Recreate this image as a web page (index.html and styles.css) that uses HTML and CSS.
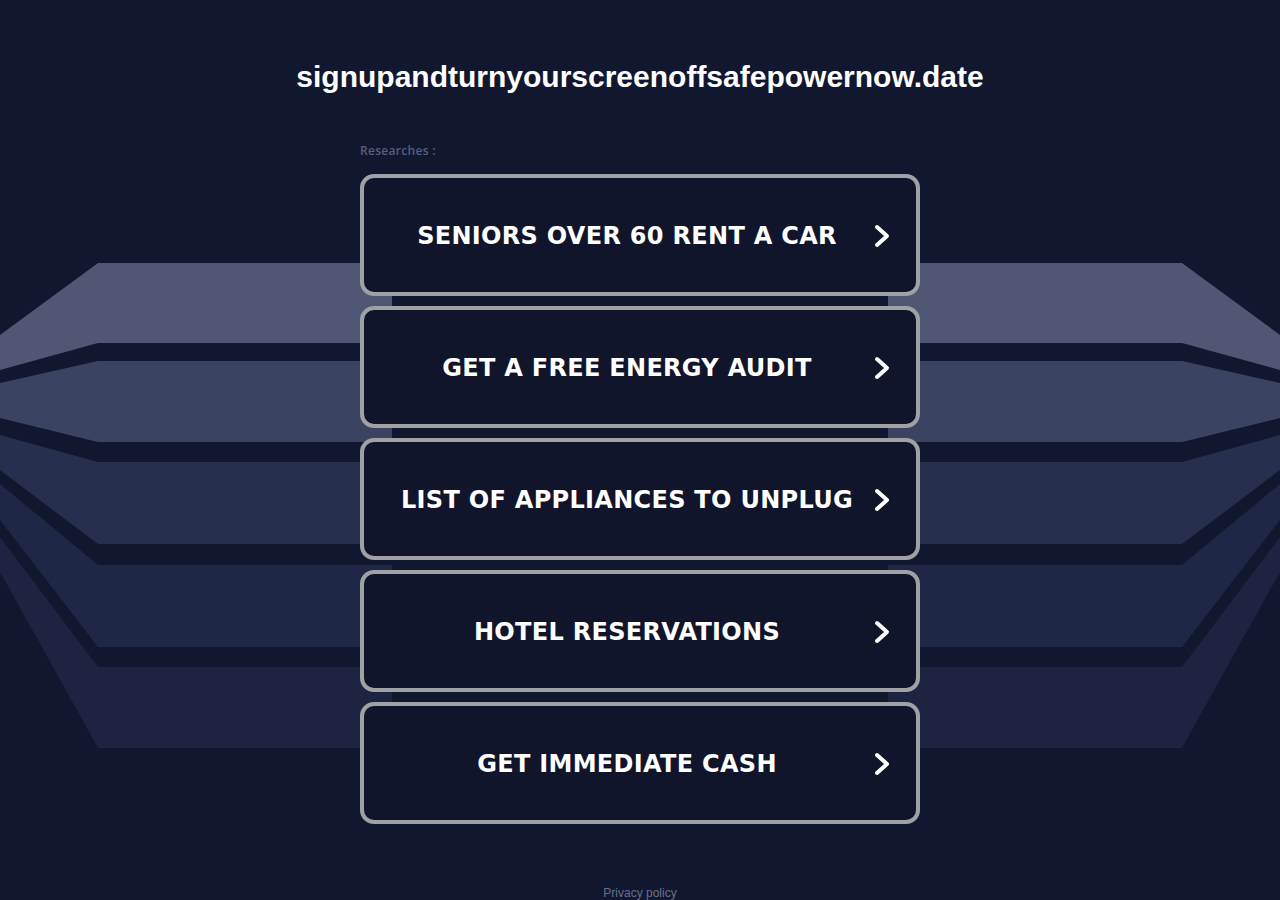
FILE: index.html
```html
<!DOCTYPE html>
<html>
<head>
<meta charset="utf-8">
<title>signupandturnyourscreenoffsafepowernow.date</title>
<link rel="stylesheet" href="styles.css">
</head>
<body>
<svg class="bg" width="1280" height="900" viewBox="0 0 1280 900" aria-hidden="true">
  <polygon fill="#4f5775" points="98,263 1182,263 1280,335 1280,370 1182,343 98,343 0,370 0,335"/>
  <polygon fill="#3b4363" points="98,361 1182,361 1280,383 1280,418 1182,442 98,442 0,418 0,383"/>
  <polygon fill="#272f4f" points="98,462 1182,462 1280,435 1280,470 1182,544 98,544 0,470 0,435"/>
  <polygon fill="#1f2747" points="98,565 1182,565 1280,484 1280,520 1182,647 98,647 0,520 0,484"/>
  <polygon fill="#1c2442" points="98,667 1182,667 1280,537 1280,572 1182,748 98,748 0,572 0,537"/>
  <rect fill="#121730" x="392" y="263" width="496" height="485"/>
</svg>
<main class="page">
  <h1 class="domain">signupandturnyourscreenoffsafepowernow.date</h1>
  <section class="results">
    <p class="label">Researches :</p>
    <ul class="list">
      <li><a class="btn" href="#"><span class="btn-text">SENIORS OVER 60 RENT A CAR</span><svg class="chev" viewBox="0 0 16 24" width="16" height="24"><polyline points="3,3 13,12 3,21"/></svg></a></li>
      <li><a class="btn" href="#"><span class="btn-text">GET A FREE ENERGY AUDIT</span><svg class="chev" viewBox="0 0 16 24" width="16" height="24"><polyline points="3,3 13,12 3,21"/></svg></a></li>
      <li><a class="btn" href="#"><span class="btn-text">LIST OF APPLIANCES TO UNPLUG</span><svg class="chev" viewBox="0 0 16 24" width="16" height="24"><polyline points="3,3 13,12 3,21"/></svg></a></li>
      <li><a class="btn" href="#"><span class="btn-text">HOTEL RESERVATIONS</span><svg class="chev" viewBox="0 0 16 24" width="16" height="24"><polyline points="3,3 13,12 3,21"/></svg></a></li>
      <li><a class="btn" href="#"><span class="btn-text">GET IMMEDIATE CASH</span><svg class="chev" viewBox="0 0 16 24" width="16" height="24"><polyline points="3,3 13,12 3,21"/></svg></a></li>
    </ul>
  </section>
  <footer class="footer"><a href="#" class="privacy">Privacy policy</a></footer>
</main>
</body>
</html>
```
FILE: styles.css
```css
html, body {
  margin: 0;
  padding: 0;
  background: #121730;
  height: 900px;
  overflow: hidden;
}
body {
  position: relative;
  font-family: "Liberation Sans", Arial, sans-serif;
}
.bg {
  position: absolute;
  left: 0;
  top: 0;
  z-index: 0;
}
.page {
  position: relative;
  z-index: 1;
  display: flex;
  flex-direction: column;
  align-items: center;
  padding-top: 59px;
}
.domain {
  margin: 0;
  font-family: "Liberation Sans", Arial, sans-serif;
  font-weight: 700;
  font-size: 30px;
  line-height: 36px;
  color: #ffffff;
  text-align: center;
}
.results {
  width: 560px;
  margin-top: 48px;
}
.label {
  margin: 0 0 15px 0;
  font-family: "Open Sans", sans-serif;
  font-weight: 600;
  font-size: 12px;
  line-height: 16px;
  letter-spacing: 0.3px;
  color: #585e7c;
}
.list {
  list-style: none;
  margin: 0;
  padding: 0;
  display: flex;
  flex-direction: column;
  gap: 10px;
}
.btn {
  display: flex;
  align-items: center;
  box-sizing: border-box;
  height: 122px;
  border: 4px solid #a0a1a5;
  border-radius: 14px;
  background: #10152c;
  padding-right: 26px;
  padding-top: 2px;
  text-decoration: none;
}
.btn-text {
  flex: 1;
  text-align: center;
  font-family: "DejaVu Sans", Verdana, sans-serif;
  font-weight: 700;
  font-size: 24px;
  color: #ffffff;
  letter-spacing: 0.3px;
}
.chev {
  flex: none;
  margin-left: -16px;
}
.chev polyline {
  fill: none;
  stroke: #ffffff;
  stroke-width: 4;
  stroke-linecap: round;
  stroke-linejoin: round;
}
.footer {
  margin-top: 59px;
  text-align: center;
}
.privacy {
  font-family: "Liberation Sans", Arial, sans-serif;
  font-size: 12px;
  line-height: 14px;
  color: #6a6f8c;
  text-decoration: none;
}
```
